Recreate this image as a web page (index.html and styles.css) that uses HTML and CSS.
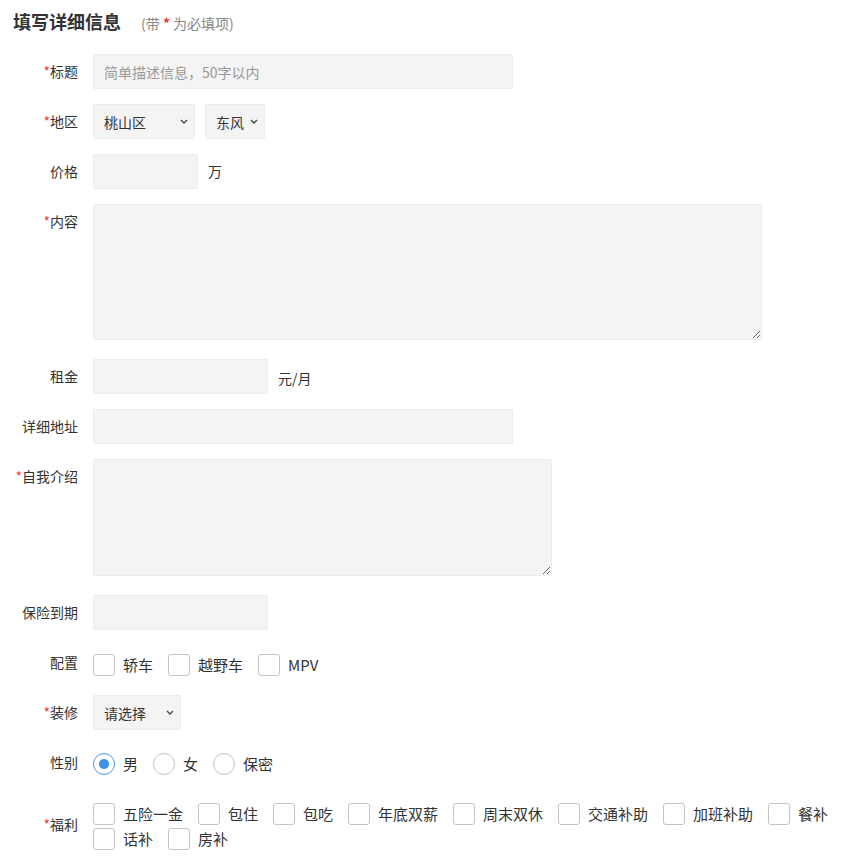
FILE: index.html
```html
<!DOCTYPE html>
<html lang="zh-CN">
<head>
    <meta charset="UTF-8">
    <meta name="viewport" content="width=device-width, initial-scale=1.0">
    <title>填写详细信息</title>
    <link rel="stylesheet" href="styles.css">
</head>
<body>

<!-- 标题 -->
<div class="header">
    <span class="header-title">填写详细信息</span>
    <span class="header-tip">(带 <b class="req">*</b> 为必填项)</span>
</div>

<form class="form">
    <div class="row">
        <div class="row-label"><span class="req">*</span>标题</div>
        <input type="text" class="input w-420" placeholder="简单描述信息，50字以内">
    </div>

    <div class="row">
        <div class="row-label"><span class="req">*</span>地区</div>
        <div class="select-group">
            <select class="select w-102">
                <option>桃山区</option>
            </select>
            <select class="select w-60">
                <option>东风</option>
            </select>
        </div>
    </div>

    <div class="row">
        <div class="row-label">价格</div>
        <input type="text" class="input w-105">
        <span class="unit">万</span>
    </div>

    <div class="row row-area">
        <div class="row-label"><span class="req">*</span>内容</div>
        <textarea class="textarea content-area"></textarea>
    </div>

    <div class="row">
        <div class="row-label">租金</div>
        <input type="text" class="input w-175">
        <span class="unit unit-low">元/月</span>
    </div>

    <div class="row">
        <div class="row-label">详细地址</div>
        <input type="text" class="input w-420">
    </div>

    <div class="row row-area">
        <div class="row-label"><span class="req">*</span>自我介绍</div>
        <textarea class="textarea intro-area"></textarea>
    </div>

    <div class="row">
        <div class="row-label">保险到期</div>
        <input type="text" class="input w-175">
    </div>

    <div class="row">
        <div class="row-label">配置</div>
        <div class="check-group">
            <label class="check"><input type="checkbox"><span>轿车</span></label>
            <label class="check"><input type="checkbox"><span>越野车</span></label>
            <label class="check"><input type="checkbox"><span>MPV</span></label>
        </div>
    </div>

    <div class="row">
        <div class="row-label"><span class="req">*</span>装修</div>
        <select class="select w-88">
            <option>请选择</option>
        </select>
    </div>

    <div class="row">
        <div class="row-label">性别</div>
        <div class="check-group radio-group">
            <label class="check"><input type="radio" name="sex" checked><span>男</span></label>
            <label class="check"><input type="radio" name="sex"><span>女</span></label>
            <label class="check"><input type="radio" name="sex"><span>保密</span></label>
        </div>
    </div>

    <div class="row row-welfare">
        <div class="row-label"><span class="req">*</span>福利</div>
        <div class="check-group">
            <label class="check"><input type="checkbox"><span>五险一金</span></label>
            <label class="check"><input type="checkbox"><span>包住</span></label>
            <label class="check"><input type="checkbox"><span>包吃</span></label>
            <label class="check"><input type="checkbox"><span>年底双薪</span></label>
            <label class="check"><input type="checkbox"><span>周末双休</span></label>
            <label class="check"><input type="checkbox"><span>交通补助</span></label>
            <label class="check"><input type="checkbox"><span>加班补助</span></label>
            <label class="check"><input type="checkbox"><span>餐补</span></label>
            <label class="check"><input type="checkbox"><span>话补</span></label>
            <label class="check"><input type="checkbox"><span>房补</span></label>
        </div>
    </div>
</form>

</body>
</html>
```

FILE: styles.css
```css
body {
    margin: 0;
    padding: 0;
    font-family: "Noto Sans CJK SC", "Noto Sans", sans-serif;
    font-size: 14px;
    color: #333;
    background-color: #fff;
}

.header {
    display: flex;
    align-items: baseline;
    height: 26px;
    padding: 8px 13px 0;
    line-height: 26px;
    margin-bottom: 20px;
}

.header-title {
    font-size: 18px;
    font-weight: bold;
    color: #333;
}

.header-tip {
    margin-left: 20px;
    font-size: 14px;
    color: #888;
}

.req {
    color: #f2373a;
}

.row {
    display: flex;
    align-items: flex-start;
    margin-bottom: 15px;
}

.row-area {
    margin-bottom: 19px;
}

.row-label {
    width: 78px;
    padding-right: 15px;
    flex-shrink: 0;
    text-align: right;
    line-height: 35px;
    font-size: 14px;
    color: #333;
}

.input,
.select,
.textarea {
    box-sizing: border-box;
    border: 1px solid #ececec;
    border-radius: 2px;
    background-color: #f4f4f4;
    font-family: inherit;
    font-size: 14px;
    color: #333;
    outline: none;
}

.input {
    height: 35px;
    padding: 0 10px;
}

.input::placeholder {
    color: #999;
}

.select {
    height: 35px;
    padding: 0 10px;
    appearance: none;
    -webkit-appearance: none;
    background-image: url("data:image/svg+xml,%3Csvg xmlns='http://www.w3.org/2000/svg' width='8' height='5' viewBox='0 0 8 5'%3E%3Cpath d='M1 1l3 3 3-3' fill='none' stroke='%23444' stroke-width='1.3'/%3E%3C/svg%3E");
    background-repeat: no-repeat;
    background-position: right 6px center;
}

.select-group {
    display: flex;
    gap: 10px;
}

.textarea {
    display: block;
    padding: 8px 10px;
}

.content-area {
    width: 669px;
    height: 136px;
}

.intro-area {
    width: 459px;
    height: 117px;
}

.w-420 { width: 420px; }
.w-175 { width: 175px; }
.w-105 { width: 105px; }
.w-102 { width: 102px; }
.w-88 { width: 88px; }
.w-60 { width: 60px; }

.unit {
    margin-left: 10px;
    line-height: 35px;
    font-size: 14px;
}

.unit-low {
    padding-top: 3px;
    line-height: 32px;
}

.check-group {
    display: flex;
    flex-wrap: wrap;
    row-gap: 3px;
    padding-top: 9px;
    flex: 1;
}

.radio-group {
    padding-top: 8px;
}

.row-welfare {
    margin-bottom: 0;
}

.row-welfare .row-label {
    align-self: center;
}

.row-welfare .check-group {
    padding: 8px 0 4px;
}

.check {
    display: flex;
    align-items: center;
    margin-right: 15px;
    font-size: 15px;
    line-height: 22px;
    color: #333;
    cursor: pointer;
}

.check input {
    appearance: none;
    -webkit-appearance: none;
    box-sizing: border-box;
    width: 22px;
    height: 22px;
    margin: 0 8px 0 0;
    border: 1px solid #c4c4c4;
    border-radius: 3px;
    background-color: #fff;
    cursor: pointer;
}

.check input[type="radio"] {
    border-radius: 50%;
}

.check input[type="radio"]:checked {
    border-color: #4a9be8;
    background: radial-gradient(circle, #3d92e6 0, #3d92e6 4.5px, #fff 5.5px);
}
```
